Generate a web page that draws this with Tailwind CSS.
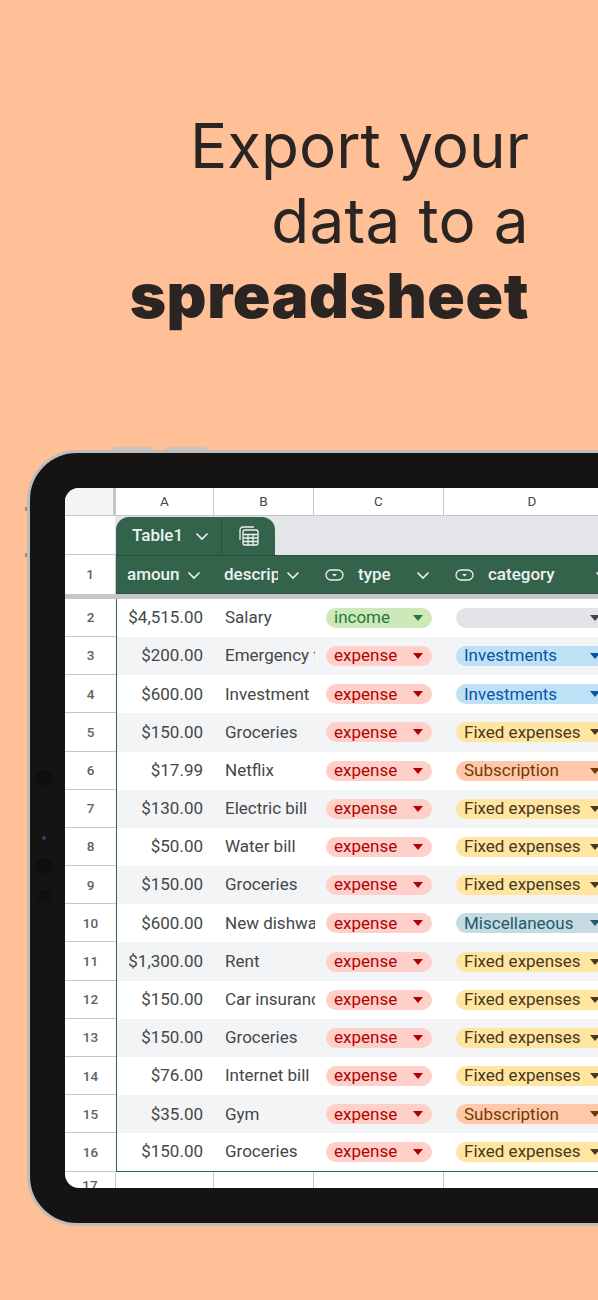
<!DOCTYPE html>
<html lang="en">
<head>
    <meta charset="UTF-8">
    <title>Export your data to a spreadsheet</title>
    <script src="https://cdn.jsdelivr.net/npm/@tailwindcss/browser@4"></script>
</head>
<body class="bg-[#ffc097] font-['Roboto',sans-serif] h-[1300px] w-[598px] overflow-hidden">

    <!-- Heading -->
    <h1 class="pt-[108px] pr-[69px] text-right font-['Inter',sans-serif] text-[#2a2522] text-[62px] leading-[75px] h-[450px]">
        Export your<br><span class="tracking-[0.35px]">data to a</span><br><b class="font-black tracking-[0.55px]">spreadsheet</b>
    </h1>

    <!-- Tablet -->
    <div class="relative ml-[27px] w-[700px] h-[776px] rounded-[50px] border-[3px] border-[#bfbdbb] bg-[#151413] p-[35px] pr-0">
        <div class="absolute -top-[6px] left-[82px] w-[42px] h-[3px] rounded-t bg-[#c9c4bf]"></div>
        <div class="absolute -top-[6px] left-[135px] w-[42px] h-[3px] rounded-t bg-[#c9c4bf]"></div>
        <div class="absolute -left-[5px] top-[54px] w-[2px] h-[4px] bg-[#a08c7c]"></div>
        <div class="absolute -left-[5px] top-[100px] w-[2px] h-[4px] bg-[#a08c7c]"></div>
        <div class="absolute left-[6px] top-[317px] w-[17px] h-[17px] rounded-full bg-[#100f0e]"></div>
        <div class="absolute left-[12px] top-[383px] w-[4px] h-[4px] rounded-full bg-[#27427e]"></div>
        <div class="absolute left-[6px] top-[405px] w-[17px] h-[17px] rounded-full bg-[#100f0e]"></div>
        <div class="absolute left-[8px] top-[437px] w-[13px] h-[13px] rounded-full bg-[#100f0e]"></div>

        <!-- Sheet -->
        <div class="h-[700px] rounded-l-[14px] bg-white overflow-hidden text-[#444746] text-[17px]">
            <!-- Column letters -->
            <div class="flex h-[28px] border-b border-[#c7c7c7] text-[13.5px]">
                <div class="w-[51px] bg-[#f3f4f6] border-r-[3px] border-[#c7c7c7]"></div>
                <div class="w-[98px] flex items-center justify-center border-r border-[#c7c7c7]">A</div>
                <div class="w-[100px] flex items-center justify-center border-r border-[#c7c7c7]">B</div>
                <div class="w-[130px] flex items-center justify-center border-r border-[#c7c7c7]">C</div>
                <div class="w-[176px] flex items-center justify-center">D</div>
            </div>

            <!-- Table tab -->
            <div class="flex h-[39px]">
                <div class="w-[51px] border-b border-[#c7c7c7] border-r border-r-[#e1e3e6]"></div>
                <div class="flex-1 flex bg-[#e4e5e8] pt-[1px]">
                    <div class="flex w-[159px] rounded-t-[13px] bg-[#34634c] text-[#edf2ef]">
                        <div class="w-[106px] flex items-center border-r border-[#28503c] pl-[16px] gap-[12px] font-medium">
                            Table1
                            <svg class="w-[14px] h-[14px]" viewBox="0 0 14 14" fill="none" stroke="currentColor" stroke-width="1.6"><path d="M1.5 4.500 7 10l5.500-5.500"/></svg>
                        </div>
                        <div class="flex-1 flex items-center justify-center">
                            <svg class="w-[22px] h-[22px]" viewBox="0 0 22 22" fill="none" stroke="currentColor" stroke-width="1.300"><path d="M2 15V5a3 3 0 0 1 3-3h11"/><rect x="5" y="5" width="15" height="15" rx="2"/><path d="M5 9.500h15M5 13h15M5 16.500h15M10 9.500V20M15 9.500V20"/></svg>
                        </div>
                    </div>
                </div>
            </div>

            <!-- Header row -->
            <div class="flex h-[39px]">
                <div class="w-[51px] flex items-center justify-center text-[13.5px] font-medium text-[#5f6060] border-r border-[#c7c7c7]">1</div>
                <div class="flex-1 flex items-center bg-[#34634c] text-[#edf2ef] font-medium border-y border-[#28503c]">
                    <div class="w-[98px] flex items-center pl-[11px]">
                        <span class="w-[53px] overflow-hidden">amount</span>
                        <svg class="w-[14px] h-[14px] ml-[7px]" viewBox="0 0 14 14" fill="none" stroke="currentColor" stroke-width="1.6"><path d="M1.5 4.500 7 10l5.500-5.500"/></svg>
                    </div>
                    <div class="w-[100px] flex items-center pl-[10px]">
                        <span class="w-[54px] overflow-hidden">description</span>
                        <svg class="w-[14px] h-[14px] ml-[8px]" viewBox="0 0 14 14" fill="none" stroke="currentColor" stroke-width="1.6"><path d="M1.5 4.500 7 10l5.500-5.500"/></svg>
                    </div>
                    <div class="w-[130px] flex items-center pl-[11px]">
                        <svg class="w-[19px] h-[14px]" viewBox="0 0 19 14" fill="none" stroke="currentColor" stroke-width="1.300"><rect x="1" y="2" width="17" height="10" rx="5"/><path d="M7 6h5l-2.500 2.500z" fill="currentColor" stroke="none"/></svg>
                        <span class="ml-[14px] w-[58px]">type</span>
                        <svg class="w-[14px] h-[14px]" viewBox="0 0 14 14" fill="none" stroke="currentColor" stroke-width="1.6"><path d="M1.5 4.500 7 10l5.500-5.500"/></svg>
                    </div>
                    <div class="flex items-center pl-[11px]">
                        <svg class="w-[19px] h-[14px]" viewBox="0 0 19 14" fill="none" stroke="currentColor" stroke-width="1.300"><rect x="1" y="2" width="17" height="10" rx="5"/><path d="M7 6h5l-2.500 2.500z" fill="currentColor" stroke="none"/></svg>
                        <span class="ml-[14px] w-[107px]">category</span>
                        <svg class="w-[14px] h-[14px]" viewBox="0 0 14 14" fill="none" stroke="currentColor" stroke-width="1.6"><path d="M1.5 4.500 7 10l5.500-5.500"/></svg>
                    </div>
                </div>
            </div>
            <div class="h-[4.8px] bg-[#c7c7c7]"></div>

            <!-- Data rows -->
            <div class="flex h-[38.2px]">
                <div class="w-[51px] shrink-0 flex items-center justify-center text-[13.5px] font-medium text-[#5f6060] border-b border-[#c7c7c7]">2</div>
                <div class="flex-1 flex items-center border-l border-[#34634c] bg-white">
                    <div class="w-[98px] text-right pr-[12px]">$4,515.00</div>
                    <div class="w-[100px] pl-[10px] whitespace-nowrap overflow-hidden">Salary</div>
                    <div class="w-[130px] pl-[11px]"><div class="w-[106px] h-[20px] rounded-full flex items-center justify-between pl-[8px] pr-[9px] bg-[#cfe8b9] text-[#1f7a3d]">income<i class="border-x-[5px] border-t-[6px] border-x-transparent border-t-[#1f7a3d]"></i></div></div>
                    <div class="pl-[11px]"><div class="w-[153px] h-[20px] rounded-full flex items-center justify-between pl-[8px] pr-[9px] bg-[#e3e4e7]"><span></span><i class="border-x-[5px] border-t-[6px] border-x-transparent border-t-[#444746]"></i></div></div>
                </div>
            </div>
            <div class="flex h-[38.2px]">
                <div class="w-[51px] shrink-0 flex items-center justify-center text-[13.5px] font-medium text-[#5f6060] border-b border-[#c7c7c7]">3</div>
                <div class="flex-1 flex items-center border-l border-[#34634c] bg-[#f3f4f6]">
                    <div class="w-[98px] text-right pr-[12px]">$200.00</div>
                    <div class="w-[100px] pl-[10px] whitespace-nowrap overflow-hidden">Emergency fund</div>
                    <div class="w-[130px] pl-[11px]"><div class="w-[106px] h-[20px] rounded-full flex items-center justify-between pl-[8px] pr-[9px] bg-[#ffcfc9] text-[#b10202]">expense<i class="border-x-[5px] border-t-[6px] border-x-transparent border-t-[#b10202]"></i></div></div>
                    <div class="pl-[11px]"><div class="w-[153px] h-[20px] rounded-full flex items-center justify-between pl-[8px] pr-[9px] bg-[#bfe1f6] text-[#0a53a8]">Investments<i class="border-x-[5px] border-t-[6px] border-x-transparent border-t-[#0a53a8]"></i></div></div>
                </div>
            </div>
            <div class="flex h-[38.2px]">
                <div class="w-[51px] shrink-0 flex items-center justify-center text-[13.5px] font-medium text-[#5f6060] border-b border-[#c7c7c7]">4</div>
                <div class="flex-1 flex items-center border-l border-[#34634c] bg-white">
                    <div class="w-[98px] text-right pr-[12px]">$600.00</div>
                    <div class="w-[100px] pl-[10px] whitespace-nowrap overflow-hidden">Investment</div>
                    <div class="w-[130px] pl-[11px]"><div class="w-[106px] h-[20px] rounded-full flex items-center justify-between pl-[8px] pr-[9px] bg-[#ffcfc9] text-[#b10202]">expense<i class="border-x-[5px] border-t-[6px] border-x-transparent border-t-[#b10202]"></i></div></div>
                    <div class="pl-[11px]"><div class="w-[153px] h-[20px] rounded-full flex items-center justify-between pl-[8px] pr-[9px] bg-[#bfe1f6] text-[#0a53a8]">Investments<i class="border-x-[5px] border-t-[6px] border-x-transparent border-t-[#0a53a8]"></i></div></div>
                </div>
            </div>
            <div class="flex h-[38.2px]">
                <div class="w-[51px] shrink-0 flex items-center justify-center text-[13.5px] font-medium text-[#5f6060] border-b border-[#c7c7c7]">5</div>
                <div class="flex-1 flex items-center border-l border-[#34634c] bg-[#f3f4f6]">
                    <div class="w-[98px] text-right pr-[12px]">$150.00</div>
                    <div class="w-[100px] pl-[10px] whitespace-nowrap overflow-hidden">Groceries</div>
                    <div class="w-[130px] pl-[11px]"><div class="w-[106px] h-[20px] rounded-full flex items-center justify-between pl-[8px] pr-[9px] bg-[#ffcfc9] text-[#b10202]">expense<i class="border-x-[5px] border-t-[6px] border-x-transparent border-t-[#b10202]"></i></div></div>
                    <div class="pl-[11px]"><div class="w-[153px] h-[20px] rounded-full flex items-center justify-between pl-[8px] pr-[9px] bg-[#ffe5a0] text-[#473821]">Fixed expenses<i class="border-x-[5px] border-t-[6px] border-x-transparent border-t-[#473821]"></i></div></div>
                </div>
            </div>
            <div class="flex h-[38.2px]">
                <div class="w-[51px] shrink-0 flex items-center justify-center text-[13.5px] font-medium text-[#5f6060] border-b border-[#c7c7c7]">6</div>
                <div class="flex-1 flex items-center border-l border-[#34634c] bg-white">
                    <div class="w-[98px] text-right pr-[12px]">$17.99</div>
                    <div class="w-[100px] pl-[10px] whitespace-nowrap overflow-hidden">Netflix</div>
                    <div class="w-[130px] pl-[11px]"><div class="w-[106px] h-[20px] rounded-full flex items-center justify-between pl-[8px] pr-[9px] bg-[#ffcfc9] text-[#b10202]">expense<i class="border-x-[5px] border-t-[6px] border-x-transparent border-t-[#b10202]"></i></div></div>
                    <div class="pl-[11px]"><div class="w-[153px] h-[20px] rounded-full flex items-center justify-between pl-[8px] pr-[9px] bg-[#ffc8aa] text-[#753800]">Subscription<i class="border-x-[5px] border-t-[6px] border-x-transparent border-t-[#753800]"></i></div></div>
                </div>
            </div>
            <div class="flex h-[38.2px]">
                <div class="w-[51px] shrink-0 flex items-center justify-center text-[13.5px] font-medium text-[#5f6060] border-b border-[#c7c7c7]">7</div>
                <div class="flex-1 flex items-center border-l border-[#34634c] bg-[#f3f4f6]">
                    <div class="w-[98px] text-right pr-[12px]">$130.00</div>
                    <div class="w-[100px] pl-[10px] whitespace-nowrap overflow-hidden">Electric bill</div>
                    <div class="w-[130px] pl-[11px]"><div class="w-[106px] h-[20px] rounded-full flex items-center justify-between pl-[8px] pr-[9px] bg-[#ffcfc9] text-[#b10202]">expense<i class="border-x-[5px] border-t-[6px] border-x-transparent border-t-[#b10202]"></i></div></div>
                    <div class="pl-[11px]"><div class="w-[153px] h-[20px] rounded-full flex items-center justify-between pl-[8px] pr-[9px] bg-[#ffe5a0] text-[#473821]">Fixed expenses<i class="border-x-[5px] border-t-[6px] border-x-transparent border-t-[#473821]"></i></div></div>
                </div>
            </div>
            <div class="flex h-[38.2px]">
                <div class="w-[51px] shrink-0 flex items-center justify-center text-[13.5px] font-medium text-[#5f6060] border-b border-[#c7c7c7]">8</div>
                <div class="flex-1 flex items-center border-l border-[#34634c] bg-white">
                    <div class="w-[98px] text-right pr-[12px]">$50.00</div>
                    <div class="w-[100px] pl-[10px] whitespace-nowrap overflow-hidden">Water bill</div>
                    <div class="w-[130px] pl-[11px]"><div class="w-[106px] h-[20px] rounded-full flex items-center justify-between pl-[8px] pr-[9px] bg-[#ffcfc9] text-[#b10202]">expense<i class="border-x-[5px] border-t-[6px] border-x-transparent border-t-[#b10202]"></i></div></div>
                    <div class="pl-[11px]"><div class="w-[153px] h-[20px] rounded-full flex items-center justify-between pl-[8px] pr-[9px] bg-[#ffe5a0] text-[#473821]">Fixed expenses<i class="border-x-[5px] border-t-[6px] border-x-transparent border-t-[#473821]"></i></div></div>
                </div>
            </div>
            <div class="flex h-[38.2px]">
                <div class="w-[51px] shrink-0 flex items-center justify-center text-[13.5px] font-medium text-[#5f6060] border-b border-[#c7c7c7]">9</div>
                <div class="flex-1 flex items-center border-l border-[#34634c] bg-[#f3f4f6]">
                    <div class="w-[98px] text-right pr-[12px]">$150.00</div>
                    <div class="w-[100px] pl-[10px] whitespace-nowrap overflow-hidden">Groceries</div>
                    <div class="w-[130px] pl-[11px]"><div class="w-[106px] h-[20px] rounded-full flex items-center justify-between pl-[8px] pr-[9px] bg-[#ffcfc9] text-[#b10202]">expense<i class="border-x-[5px] border-t-[6px] border-x-transparent border-t-[#b10202]"></i></div></div>
                    <div class="pl-[11px]"><div class="w-[153px] h-[20px] rounded-full flex items-center justify-between pl-[8px] pr-[9px] bg-[#ffe5a0] text-[#473821]">Fixed expenses<i class="border-x-[5px] border-t-[6px] border-x-transparent border-t-[#473821]"></i></div></div>
                </div>
            </div>
            <div class="flex h-[38.2px]">
                <div class="w-[51px] shrink-0 flex items-center justify-center text-[13.5px] font-medium text-[#5f6060] border-b border-[#c7c7c7]">10</div>
                <div class="flex-1 flex items-center border-l border-[#34634c] bg-white">
                    <div class="w-[98px] text-right pr-[12px]">$600.00</div>
                    <div class="w-[100px] pl-[10px] whitespace-nowrap overflow-hidden">New dishwasher</div>
                    <div class="w-[130px] pl-[11px]"><div class="w-[106px] h-[20px] rounded-full flex items-center justify-between pl-[8px] pr-[9px] bg-[#ffcfc9] text-[#b10202]">expense<i class="border-x-[5px] border-t-[6px] border-x-transparent border-t-[#b10202]"></i></div></div>
                    <div class="pl-[11px]"><div class="w-[153px] h-[20px] rounded-full flex items-center justify-between pl-[8px] pr-[9px] bg-[#c6dbe1] text-[#215a6c]">Miscellaneous<i class="border-x-[5px] border-t-[6px] border-x-transparent border-t-[#215a6c]"></i></div></div>
                </div>
            </div>
            <div class="flex h-[38.2px]">
                <div class="w-[51px] shrink-0 flex items-center justify-center text-[13.5px] font-medium text-[#5f6060] border-b border-[#c7c7c7]">11</div>
                <div class="flex-1 flex items-center border-l border-[#34634c] bg-[#f3f4f6]">
                    <div class="w-[98px] text-right pr-[12px]">$1,300.00</div>
                    <div class="w-[100px] pl-[10px] whitespace-nowrap overflow-hidden">Rent</div>
                    <div class="w-[130px] pl-[11px]"><div class="w-[106px] h-[20px] rounded-full flex items-center justify-between pl-[8px] pr-[9px] bg-[#ffcfc9] text-[#b10202]">expense<i class="border-x-[5px] border-t-[6px] border-x-transparent border-t-[#b10202]"></i></div></div>
                    <div class="pl-[11px]"><div class="w-[153px] h-[20px] rounded-full flex items-center justify-between pl-[8px] pr-[9px] bg-[#ffe5a0] text-[#473821]">Fixed expenses<i class="border-x-[5px] border-t-[6px] border-x-transparent border-t-[#473821]"></i></div></div>
                </div>
            </div>
            <div class="flex h-[38.2px]">
                <div class="w-[51px] shrink-0 flex items-center justify-center text-[13.5px] font-medium text-[#5f6060] border-b border-[#c7c7c7]">12</div>
                <div class="flex-1 flex items-center border-l border-[#34634c] bg-white">
                    <div class="w-[98px] text-right pr-[12px]">$150.00</div>
                    <div class="w-[100px] pl-[10px] whitespace-nowrap overflow-hidden">Car insurance</div>
                    <div class="w-[130px] pl-[11px]"><div class="w-[106px] h-[20px] rounded-full flex items-center justify-between pl-[8px] pr-[9px] bg-[#ffcfc9] text-[#b10202]">expense<i class="border-x-[5px] border-t-[6px] border-x-transparent border-t-[#b10202]"></i></div></div>
                    <div class="pl-[11px]"><div class="w-[153px] h-[20px] rounded-full flex items-center justify-between pl-[8px] pr-[9px] bg-[#ffe5a0] text-[#473821]">Fixed expenses<i class="border-x-[5px] border-t-[6px] border-x-transparent border-t-[#473821]"></i></div></div>
                </div>
            </div>
            <div class="flex h-[38.2px]">
                <div class="w-[51px] shrink-0 flex items-center justify-center text-[13.5px] font-medium text-[#5f6060] border-b border-[#c7c7c7]">13</div>
                <div class="flex-1 flex items-center border-l border-[#34634c] bg-[#f3f4f6]">
                    <div class="w-[98px] text-right pr-[12px]">$150.00</div>
                    <div class="w-[100px] pl-[10px] whitespace-nowrap overflow-hidden">Groceries</div>
                    <div class="w-[130px] pl-[11px]"><div class="w-[106px] h-[20px] rounded-full flex items-center justify-between pl-[8px] pr-[9px] bg-[#ffcfc9] text-[#b10202]">expense<i class="border-x-[5px] border-t-[6px] border-x-transparent border-t-[#b10202]"></i></div></div>
                    <div class="pl-[11px]"><div class="w-[153px] h-[20px] rounded-full flex items-center justify-between pl-[8px] pr-[9px] bg-[#ffe5a0] text-[#473821]">Fixed expenses<i class="border-x-[5px] border-t-[6px] border-x-transparent border-t-[#473821]"></i></div></div>
                </div>
            </div>
            <div class="flex h-[38.2px]">
                <div class="w-[51px] shrink-0 flex items-center justify-center text-[13.5px] font-medium text-[#5f6060] border-b border-[#c7c7c7]">14</div>
                <div class="flex-1 flex items-center border-l border-[#34634c] bg-white">
                    <div class="w-[98px] text-right pr-[12px]">$76.00</div>
                    <div class="w-[100px] pl-[10px] whitespace-nowrap overflow-hidden">Internet bill</div>
                    <div class="w-[130px] pl-[11px]"><div class="w-[106px] h-[20px] rounded-full flex items-center justify-between pl-[8px] pr-[9px] bg-[#ffcfc9] text-[#b10202]">expense<i class="border-x-[5px] border-t-[6px] border-x-transparent border-t-[#b10202]"></i></div></div>
                    <div class="pl-[11px]"><div class="w-[153px] h-[20px] rounded-full flex items-center justify-between pl-[8px] pr-[9px] bg-[#ffe5a0] text-[#473821]">Fixed expenses<i class="border-x-[5px] border-t-[6px] border-x-transparent border-t-[#473821]"></i></div></div>
                </div>
            </div>
            <div class="flex h-[38.2px]">
                <div class="w-[51px] shrink-0 flex items-center justify-center text-[13.5px] font-medium text-[#5f6060] border-b border-[#c7c7c7]">15</div>
                <div class="flex-1 flex items-center border-l border-[#34634c] bg-[#f3f4f6]">
                    <div class="w-[98px] text-right pr-[12px]">$35.00</div>
                    <div class="w-[100px] pl-[10px] whitespace-nowrap overflow-hidden">Gym</div>
                    <div class="w-[130px] pl-[11px]"><div class="w-[106px] h-[20px] rounded-full flex items-center justify-between pl-[8px] pr-[9px] bg-[#ffcfc9] text-[#b10202]">expense<i class="border-x-[5px] border-t-[6px] border-x-transparent border-t-[#b10202]"></i></div></div>
                    <div class="pl-[11px]"><div class="w-[153px] h-[20px] rounded-full flex items-center justify-between pl-[8px] pr-[9px] bg-[#ffc8aa] text-[#753800]">Subscription<i class="border-x-[5px] border-t-[6px] border-x-transparent border-t-[#753800]"></i></div></div>
                </div>
            </div>
            <div class="flex h-[38.2px]">
                <div class="w-[51px] shrink-0 flex items-center justify-center text-[13.5px] font-medium text-[#5f6060] border-b border-[#c7c7c7]">16</div>
                <div class="flex-1 flex items-center border-l border-b border-[#34634c] bg-white">
                    <div class="w-[98px] text-right pr-[12px]">$150.00</div>
                    <div class="w-[100px] pl-[10px] whitespace-nowrap overflow-hidden">Groceries</div>
                    <div class="w-[130px] pl-[11px]"><div class="w-[106px] h-[20px] rounded-full flex items-center justify-between pl-[8px] pr-[9px] bg-[#ffcfc9] text-[#b10202]">expense<i class="border-x-[5px] border-t-[6px] border-x-transparent border-t-[#b10202]"></i></div></div>
                    <div class="pl-[11px]"><div class="w-[153px] h-[20px] rounded-full flex items-center justify-between pl-[8px] pr-[9px] bg-[#ffe5a0] text-[#473821]">Fixed expenses<i class="border-x-[5px] border-t-[6px] border-x-transparent border-t-[#473821]"></i></div></div>
                </div>
            </div>
            <div class="flex h-[30px] text-[13.5px] font-medium text-[#5f6060]">
                <div class="w-[51px] flex justify-center pt-[3px] border-r border-[#c7c7c7]">17</div>
                <div class="w-[98px] border-r border-[#c7c7c7]"></div>
                <div class="w-[100px] border-r border-[#c7c7c7]"></div>
                <div class="w-[130px] border-r border-[#c7c7c7]"></div>
            </div>
        </div>
    </div>
</body>
</html>
